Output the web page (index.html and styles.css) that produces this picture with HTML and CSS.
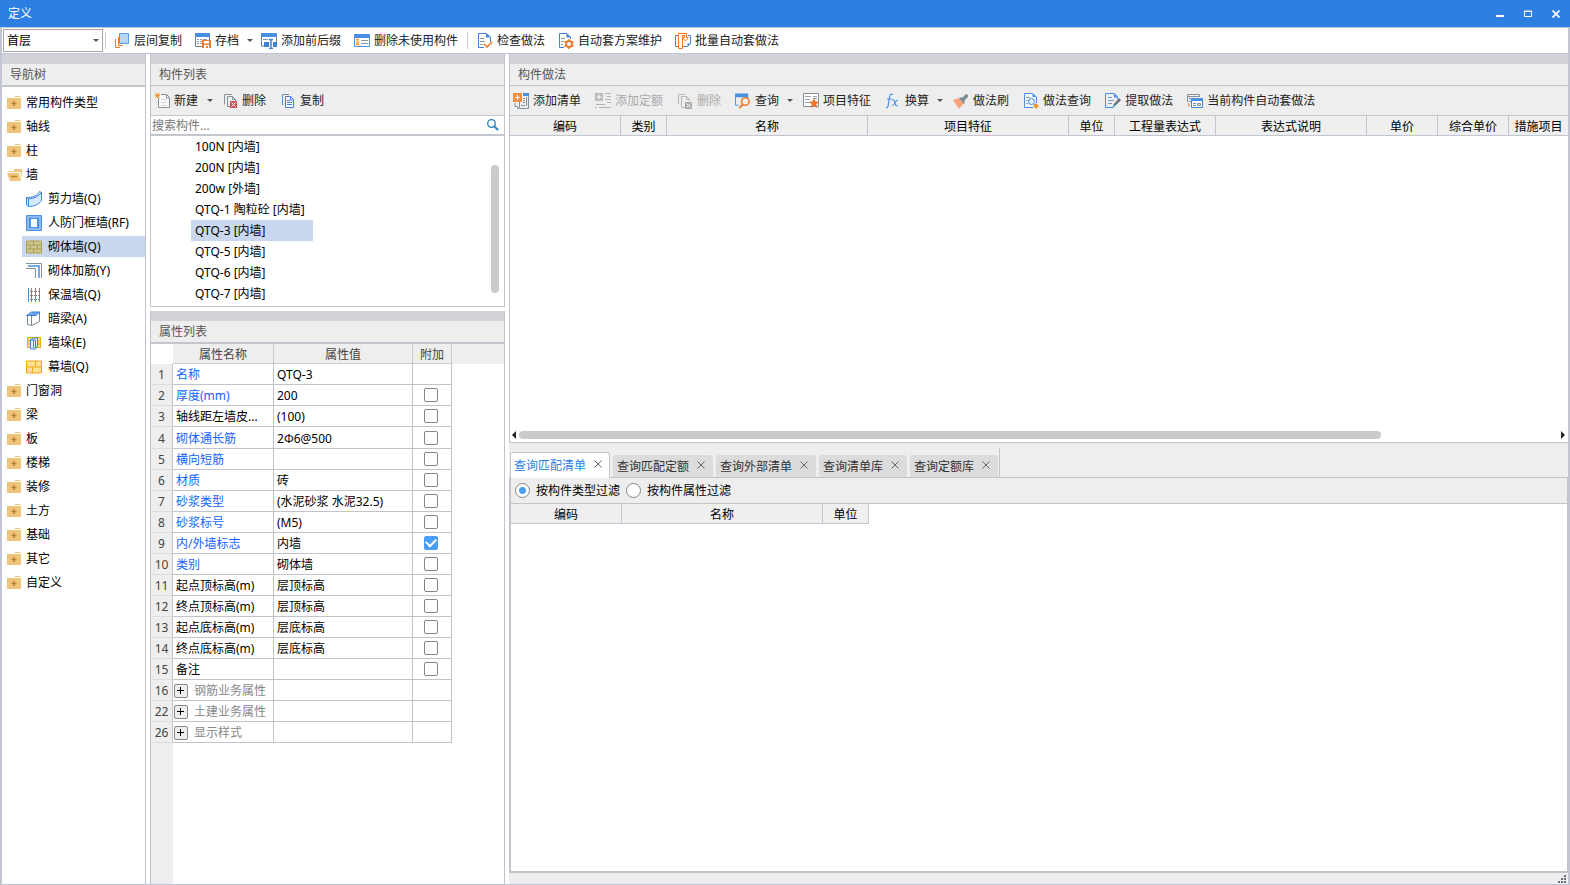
FILE: index.html
```html
<!DOCTYPE html>
<html lang="zh-CN">
<head>
<meta charset="utf-8">
<title>定义</title>
<link rel="stylesheet" href="styles.css">
</head>
<body>
<svg class="sprite" aria-hidden="true">
  <symbol id="i-layers" viewBox="0 0 16 16"><path d="M1.500 6v8.500H6M4.500 4v8.500H9" fill="none" stroke="#ee7d31"/><path d="M5.500.5h9v10h-9z" fill="#b9d7fb" stroke="#5b9be6"/></symbol>
  <symbol id="i-archive" viewBox="0 0 16 16"><path d="M0 0h15v4H0z" fill="#4a90e2"/><path d="M.5 4v9.500H7M14.500 4v3" fill="none" stroke="#6d7f8d"/><path d="M2 6.500h2M5 6.500h2M8 6.500h4M2 8.500h2M5 8.500h2M2 10.500h2M5 10.500h2" stroke="#8b98a3"/><path d="M7 7h9v8H7z" fill="#ee7d31"/><path d="M9 8h5v2.500H9zM9 12h5v3H9z" fill="#fff"/><path d="M11 13h2v2h-2z" fill="#ee7d31"/></symbol>
  <symbol id="i-affix" viewBox="0 0 16 16"><path d="M0 0h16v4H0z" fill="#4a90e2"/><path d="M.5 4v9H3M15.500 4v5" fill="none" stroke="#6d7f8d"/><path d="M2 6.500h5" stroke="#8b98a3"/><path d="M3 9h5v5H3zM12 9h4v5h-4z" fill="#3f83d8"/><path d="M8 6.500h4M10 7v8M8 15.500h4" stroke="#3f83d8" stroke-width="1.500"/></symbol>
  <symbol id="i-unused" viewBox="0 0 16 16"><path d="M.5 1.500h15v12H.5z" fill="#fff" stroke="#4a90e2"/><path d="M0 1h16v4H0z" fill="#4a90e2"/><path d="M2 6l3 2.500M5 6 2 8.500M2 9.500l3 2.500M5 9.500 2 12" stroke="#ee9a31" stroke-width="1.200"/><path d="M7 7.500h7M7 10.500h7" stroke="#8b98a3"/></symbol>
  <symbol id="i-check" viewBox="0 0 16 16"><path d="M13.500 9V4L9.500.5h-8v14H7" fill="none" stroke="#3f83d8"/><path d="M9 .5V4.500h4z" fill="#3f83d8"/><path d="M3 5.500h4M3 8.500h5M3 11.500h3" stroke="#8b98a3"/><path d="M7 11l3 3 5-5" fill="none" stroke="#ee7d31" stroke-width="1.600"/></symbol>
  <symbol id="i-scheme" viewBox="0 0 16 16"><path d="M12.500 6V4L9 .5H1.500v14H6" fill="none" stroke="#3f83d8"/><path d="M8.500 .5V4.500h4z" fill="#3f83d8"/><path d="M3 5.500h4M3 8.500h3M3 11.500h2" stroke="#8b98a3"/><circle cx="11" cy="11" r="3" fill="none" stroke="#ee7d31" stroke-width="2"/><path d="M11 6v2m0 6v2M6.500 8.500l2 1m5 3 2 1m-9 0 2-1m5-3 2-1" stroke="#ee7d31" stroke-width="1.600"/></symbol>
  <symbol id="i-batch" viewBox="0 0 16 16"><path d="M4 2.500H.5v11H4M13 2.500h2.500v8l-3 3H7" fill="none" stroke="#3f83d8"/><path d="M15.500 10.500h-3v3z" fill="#3f83d8"/><path d="M3.500 15.500V.5h8v4h2L10.500 8l-3-3.500h2v-2h-2v13z" fill="#fff" stroke="#ee7d31"/></symbol>
  <symbol id="i-new" viewBox="0 0 16 16"><path d="M3.500 5v9.500h11V4.500l-3-3H6" fill="#fafafa" stroke="#84919b"/><path d="M11.500 1.500v3.500h3" fill="none" stroke="#84919b"/><path d="M6 6.500h6M6 9.500h6M6 12.500h6" stroke="#d2d6d9"/><path d="m0 0 5 5m0-5L0 5M2.500 0v5M0 2.500h5" stroke="#ef9a2f"/></symbol>
  <symbol id="i-delete" viewBox="0 0 16 16"><path d="M1.500 11.500V1.500H9M4.500 14V3.500h5l3 3V8M8 13.500H4.500M9.500 3.500v3h3" fill="none" stroke="#84919b"/><path d="M7 8h7v7H7z" fill="#cf5353"/><path d="m8.500 9.500 4 4m0-4-4 4" stroke="#fff"/></symbol>
  <symbol id="i-delete-off" viewBox="0 0 16 16"><path d="M1.500 11.500V1.500H8M4.500 14V3.500h5l3 3V8M8 14.500H4.500M9.500 3.500v3h3" fill="none" stroke="#b5b5b5"/><path d="M8 9h7v7H8z" fill="#aaa"/><path d="m9.500 10.500 4 4m0-4-4 4" stroke="#fff"/></symbol>
  <symbol id="i-copy" viewBox="0 0 16 16"><path d="M1.500 12V1.500H8" fill="none" stroke="#6d8fb0"/><path d="M4.500 3.500h5l3 3v8h-8z" fill="#fff" stroke="#3f83d8"/><path d="M9.500 3.500V7h3" fill="none" stroke="#3f83d8"/><path d="M6 7.500h3M6 9.500h5M6 11.500h5" stroke="#3f83d8"/></symbol>
  <symbol id="i-addlist" viewBox="0 0 16 16"><path d="M10 0h6v3h-6z" fill="#4a90e2"/><path d="M15.500 3v12.500h-9V9M13.500 4v9M2 10v3.500h2.500v2H6" fill="none" stroke="#84919b"/><path d="M8 12.500h4M10 9.500h2M10 7.500h2M10 5.500h2" stroke="#84919b"/><path d="M0 0h9v9H0z" fill="#ee8f3f"/><path d="M4.500 2v5M2 4.500h5" stroke="#fff"/></symbol>
  <symbol id="i-addquota" viewBox="0 0 16 16"><path d="M0 0h8v8H0z" fill="#bbb"/><path d="M4 1.500v5M1.500 4h5" stroke="#fff"/><path d="M10 .5h6M12 3.500h4M10 6.500h6M12 9.500h4M1 11.500h9M4 14.500h12M0 14.500h2" stroke="#b3b3b3"/></symbol>
  <symbol id="i-query" viewBox="0 0 17 16"><path d="M0 0h14v4H0z" fill="#4a90e2"/><path d="M.5 3v9.500H4M13.500 3v2" fill="none" stroke="#4a90e2"/><circle cx="11" cy="8.500" r="4" fill="#fff5ec" stroke="#ee7d31" stroke-width="1.700"/><path d="m8 12-3.500 3.500" stroke="#ee7d31" stroke-width="2"/></symbol>
  <symbol id="i-feature" viewBox="0 0 16 16"><path d="M.5 .5h15v13H.5z" fill="#fff" stroke="#84919b"/><path d="M2 3.500h6M10 3.500h4M10 5.500h4M2 6.500h5M2 9.500h5" stroke="#9aa4ad"/><path d="m11 5 1.500 3.500 3.500.3-2.700 2.400.9 3.800-3.200-2-3.200 2 .9-3.800L6 8.800l3.500-.3z" fill="#f07427"/></symbol>
  <symbol id="i-fx" viewBox="0 0 16 16"><path d="M1 14.500c2 .5 2-1 2.500-4l1-6.500C5 1 6 .5 8 1.500M2 6h5M7.500 7c3-1 2 7 5 5.500M13 7c-2-.5-4 6-6 5.500" fill="none" stroke="#4a90e2" stroke-width="1.200"/></symbol>
  <symbol id="i-brush" viewBox="0 0 16 16"><path d="m0 7 6-2 5 5-5 6z" fill="#fba27a"/><path d="m6 5 2-1 1 1 4-4 2 1v2l-4 4 1 1-1 2z" fill="#7c8b95"/></symbol>
  <symbol id="i-methodq" viewBox="0 0 16 16"><path d="M13.500 10V4L9.500.5h-8v14H10" fill="#f7fbff" stroke="#4a90e2"/><path d="M9.500 .5V4h4z" fill="#4a90e2"/><path d="M3 4.500h4M3 7.500h2M3 10.500h2" stroke="#8b98a3"/><circle cx="8.500" cy="8.500" r="3" fill="#e9f3ff" stroke="#3f83d8"/><path d="m11 11 3 3" stroke="#3f83d8"/><path d="m13 10 3 3-3 3-3-3z" fill="#ef9a2f"/></symbol>
  <symbol id="i-extract" viewBox="0 0 16 16"><path d="M12.500 6V4L9.500.5h-9v14h8" fill="none" stroke="#4a90e2"/><path d="M9 .5V4.500h4z" fill="#4a90e2"/><path d="M3 4.500h4M3 7.500h6M3 10.500h4" stroke="#8b98a3"/><path d="m14 5 2 2-6 6-2 1 1-3z" fill="#65717b"/><path d="m9 11 1.500 1.500L7 15z" fill="#31b4c8"/></symbol>
  <symbol id="i-current" viewBox="0 0 16 16"><path d="M.5 9V1.500h12V4M1 3.500h12M2 5.500h2M2 8.500h2" fill="none" stroke="#84919b"/><path d="M1.500 10v2.500H3" fill="none" stroke="#ee7d31"/><path d="M4.500 5.500h11v9h-11z" fill="#fff" stroke="#3f83d8"/><path d="M4 5h12v3H4z" fill="#4a90e2"/><path d="M6 10.500h3M6 12.500h3M10.500 10.500h3v2h-3z" stroke="#84919b" fill="#cfd5da"/></symbol>
  <symbol id="i-search" viewBox="0 0 12 12"><circle cx="4.500" cy="4.500" r="3.800" fill="none" stroke="#2583bd" stroke-width="1.300"/><path d="m7 7 4 4" stroke="#2583bd" stroke-width="2"/></symbol>
  <symbol id="i-folder" viewBox="0 0 16 14"><path d="M8 0h5l1 1H7zM0 2h14v11H0z" fill="#eec57b"/><path d="M7 5v5M4.500 7.500h5" stroke="#b98534" stroke-width="1.600"/></symbol>
  <symbol id="i-folder-open" viewBox="0 0 16 14"><path d="M7 1h8v11l-1.500-8H1.500V3H7z" fill="#eec57b"/><path d="M0 5h12l2 8H3z" fill="#eec57b"/><path d="M4 8.500h6" stroke="#b98534" stroke-width="1.600"/></symbol>
  <symbol id="i-shear" viewBox="0 0 16 16"><path d="M.5 6.500C7 6.500 11 5 13.500.5l2 1v8C12 14 8 15.500 2.500 15.500l-2-1.500z" fill="#d8e9fc" stroke="#3f83d8"/><path d="M.5 6.500l2 1.500c6-.5 10-2.500 13-6.500M2.500 8v7" fill="none" stroke="#3f83d8"/></symbol>
  <symbol id="i-frame" viewBox="0 0 16 16"><path d="M.5.5h15v15H.5z" fill="#8dbaf2" stroke="#4a90e2"/><path d="M3 3h10v10H3z" fill="#4a90e2"/><path d="M5 4h6v8H5z" fill="#fff"/></symbol>
  <symbol id="i-brick" viewBox="0 0 16 13"><path d="M.5.500h15v12H.5zM0 4.500h16M0 8.500h16M7.500 0v4.500M4.500 4.500v4M11.500 4.500v4M7.500 8.500v4" fill="#c9c691" stroke="#ae9f4e"/></symbol>
  <symbol id="i-rebar" viewBox="0 0 16 16"><path d="M0 .5h15.500V15M0 5.500h9.500V15" fill="none" stroke="#84919b"/><path d="M2 3h11v12" fill="none" stroke="#4a90e2" stroke-width="1.500"/></symbol>
  <symbol id="i-insul" viewBox="0 0 16 16"><path d="M2.500 1v14M5.500 1v14M9.500 1v14M13.500 1v14" stroke="#4a90e2"/><path d="M2 4.500h11M2 8.500h11M2 12.500h11" stroke="#6d7f8d" stroke-dasharray="1 1"/></symbol>
  <symbol id="i-beam" viewBox="0 0 16 16"><path d="M1.500 4.500h4v10l-4-1zM5.500 14.500l8-4v-9" fill="#fff" stroke="#7a8894"/><path d="m.5 4.500 5-3.500h8.500l-4 3.500z" fill="#8fbdf3" stroke="#3f83d8"/><path d="M4.500 4 9 1M8 4l4-3" stroke="#3f83d8"/></symbol>
  <symbol id="i-pier" viewBox="0 0 16 16"><path d="M1.500 2.500h13v10h-13zM1 6h14M1 9h14" fill="#fddc86" stroke="#f2a900"/><path d="m4.500 5 3-2h4v8l-2 3h-5z" fill="#e2effd" stroke="#3f83d8"/><path d="M7.500 5v8M4.500 5h5v8" fill="none" stroke="#3f83d8"/></symbol>
  <symbol id="i-curtain" viewBox="0 0 16 13"><path d="M.5.500h15v12H.5zM0 6.500h16M9.500 0v6.500M6.500 6.500v6" fill="#fde08f" stroke="#f2a81d"/></symbol>
</svg>

<div class="app">
  <header class="titlebar">
    <span class="title">定义</span>
    <button class="win" aria-label="最小化"><svg viewBox="0 0 8 8"><path d="M0 5h8v2H0z" fill="#fff"/></svg></button>
    <button class="win" aria-label="最大化"><svg viewBox="0 0 8 8"><path d="M.5 1.500h7v5h-7zM0 1h8" fill="none" stroke="#fff"/></svg></button>
    <button class="win" aria-label="关闭"><svg viewBox="0 0 8 8"><path d="m.5.500 7 7m0-7-7 7" stroke="#fff" stroke-width="1.700"/></svg></button>
  </header>

  <div class="mainbar">
    <div class="floor">
      <select aria-label="楼层"><option>首层</option></select>
      <span class="caret"></span>
    </div>
    <span class="sep"></span>
    <button class="tool"><svg class="ic"><use href="#i-layers"/></svg>层间复制</button>
    <button class="tool drop"><svg class="ic"><use href="#i-archive"/></svg>存档<span class="caret"></span></button>
    <button class="tool"><svg class="ic"><use href="#i-affix"/></svg>添加前后缀</button>
    <button class="tool"><svg class="ic"><use href="#i-unused"/></svg>删除未使用构件</button>
    <span class="sep"></span>
    <button class="tool"><svg class="ic"><use href="#i-check"/></svg>检查做法</button>
    <button class="tool"><svg class="ic"><use href="#i-scheme"/></svg>自动套方案维护</button>
    <button class="tool"><svg class="ic"><use href="#i-batch"/></svg>批量自动套做法</button>
  </div>

  <div class="work">
    <nav class="panel nav">
      <h2 class="head thick">导航树</h2>
      <ul class="tree">
        <li><svg class="fi"><use href="#i-folder"/></svg>常用构件类型</li>
        <li><svg class="fi"><use href="#i-folder"/></svg>轴线</li>
        <li><svg class="fi"><use href="#i-folder"/></svg>柱</li>
        <li><svg class="fi"><use href="#i-folder-open"/></svg>墙</li>
        <li class="sub"><svg class="ic"><use href="#i-shear"/></svg>剪力墙(Q)</li>
        <li class="sub"><svg class="ic"><use href="#i-frame"/></svg>人防门框墙(RF)</li>
        <li class="sub on"><svg class="ic"><use href="#i-brick"/></svg>砌体墙(Q)</li>
        <li class="sub"><svg class="ic"><use href="#i-rebar"/></svg>砌体加筋(Y)</li>
        <li class="sub"><svg class="ic"><use href="#i-insul"/></svg>保温墙(Q)</li>
        <li class="sub"><svg class="ic"><use href="#i-beam"/></svg>暗梁(A)</li>
        <li class="sub"><svg class="ic"><use href="#i-pier"/></svg>墙垛(E)</li>
        <li class="sub"><svg class="ic"><use href="#i-curtain"/></svg>幕墙(Q)</li>
        <li><svg class="fi"><use href="#i-folder"/></svg>门窗洞</li>
        <li><svg class="fi"><use href="#i-folder"/></svg>梁</li>
        <li><svg class="fi"><use href="#i-folder"/></svg>板</li>
        <li><svg class="fi"><use href="#i-folder"/></svg>楼梯</li>
        <li><svg class="fi"><use href="#i-folder"/></svg>装修</li>
        <li><svg class="fi"><use href="#i-folder"/></svg>土方</li>
        <li><svg class="fi"><use href="#i-folder"/></svg>基础</li>
        <li><svg class="fi"><use href="#i-folder"/></svg>其它</li>
        <li><svg class="fi"><use href="#i-folder"/></svg>自定义</li>
      </ul>
    </nav>

    <div class="middle">
      <section class="panel components">
        <h2 class="head">构件列表</h2>
        <div class="bar">
          <button class="tool drop"><svg class="ic"><use href="#i-new"/></svg>新建<span class="caret"></span></button>
          <button class="tool"><svg class="ic"><use href="#i-delete"/></svg>删除</button>
          <button class="tool"><svg class="ic"><use href="#i-copy"/></svg>复制</button>
        </div>
        <div class="search">
          <input type="text" placeholder="搜索构件..." aria-label="搜索构件">
          <button aria-label="搜索"><svg><use href="#i-search"/></svg></button>
        </div>
        <div class="listbox">
          <ul class="list">
            <li>100N [内墙]</li>
            <li>200N [内墙]</li>
            <li>200w [外墙]</li>
            <li>QTQ-1 陶粒砼 [内墙]</li>
            <li class="on">QTQ-3 [内墙]</li>
            <li>QTQ-5 [内墙]</li>
            <li>QTQ-6 [内墙]</li>
            <li>QTQ-7 [内墙]</li>
          </ul>
          <div class="vscroll"></div>
        </div>
      </section>

      <section class="panel props">
        <h2 class="head thick">属性列表</h2>
        <div class="sheet">
          <table class="ptable">
            <colgroup><col class="c-no"><col class="c-name"><col class="c-val"><col class="c-add"></colgroup>
            <thead><tr><td></td><th>属性名称</th><th>属性值</th><th>附加</th></tr></thead>
            <tbody>
              <tr><th>1</th><td class="key">名称</td><td>QTQ-3</td><td></td></tr>
              <tr><th>2</th><td class="key">厚度(mm)</td><td>200</td><td><input type="checkbox" aria-label="附加 厚度"></td></tr>
              <tr><th>3</th><td>轴线距左墙皮...</td><td>(100)</td><td><input type="checkbox" aria-label="附加 轴线距左墙皮"></td></tr>
              <tr><th>4</th><td class="key">砌体通长筋</td><td>2<span class="bar-mark">Ф</span>6@500</td><td><input type="checkbox" aria-label="附加 砌体通长筋"></td></tr>
              <tr><th>5</th><td class="key">横向短筋</td><td></td><td><input type="checkbox" aria-label="附加 横向短筋"></td></tr>
              <tr><th>6</th><td class="key">材质</td><td>砖</td><td><input type="checkbox" aria-label="附加 材质"></td></tr>
              <tr><th>7</th><td class="key">砂浆类型</td><td>(水泥砂浆 水泥32.5)</td><td><input type="checkbox" aria-label="附加 砂浆类型"></td></tr>
              <tr><th>8</th><td class="key">砂浆标号</td><td>(M5)</td><td><input type="checkbox" aria-label="附加 砂浆标号"></td></tr>
              <tr><th>9</th><td class="key">内/外墙标志</td><td>内墙</td><td><input type="checkbox" checked aria-label="附加 内/外墙标志"></td></tr>
              <tr><th>10</th><td class="key">类别</td><td>砌体墙</td><td><input type="checkbox" aria-label="附加 类别"></td></tr>
              <tr><th>11</th><td>起点顶标高(m)</td><td>层顶标高</td><td><input type="checkbox" aria-label="附加 起点顶标高"></td></tr>
              <tr><th>12</th><td>终点顶标高(m)</td><td>层顶标高</td><td><input type="checkbox" aria-label="附加 终点顶标高"></td></tr>
              <tr><th>13</th><td>起点底标高(m)</td><td>层底标高</td><td><input type="checkbox" aria-label="附加 起点底标高"></td></tr>
              <tr><th>14</th><td>终点底标高(m)</td><td>层底标高</td><td><input type="checkbox" aria-label="附加 终点底标高"></td></tr>
              <tr><th>15</th><td>备注</td><td></td><td><input type="checkbox" aria-label="附加 备注"></td></tr>
              <tr><th>16</th><td class="group"><button class="plus" aria-label="展开"></button>钢筋业务属性</td><td></td><td></td></tr>
              <tr><th>22</th><td class="group"><button class="plus" aria-label="展开"></button>土建业务属性</td><td></td><td></td></tr>
              <tr><th>26</th><td class="group"><button class="plus" aria-label="展开"></button>显示样式</td><td></td><td></td></tr>
            </tbody>
          </table>
          <div class="gutter"></div>
        </div>
      </section>
    </div>

    <main class="right">
      <section class="panel methods">
        <h2 class="head">构件做法</h2>
        <div class="bar">
          <button class="tool"><svg class="ic"><use href="#i-addlist"/></svg>添加清单</button>
          <button class="tool" disabled><svg class="ic"><use href="#i-addquota"/></svg>添加定额</button>
          <button class="tool" disabled><svg class="ic"><use href="#i-delete-off"/></svg>删除</button>
          <button class="tool drop"><svg class="ic"><use href="#i-query"/></svg>查询<span class="caret"></span></button>
          <button class="tool"><svg class="ic"><use href="#i-feature"/></svg>项目特征</button>
          <button class="tool drop"><svg class="ic"><use href="#i-fx"/></svg>换算<span class="caret"></span></button>
          <button class="tool"><svg class="ic"><use href="#i-brush"/></svg>做法刷</button>
          <button class="tool"><svg class="ic"><use href="#i-methodq"/></svg>做法查询</button>
          <button class="tool"><svg class="ic"><use href="#i-extract"/></svg>提取做法</button>
          <button class="tool"><svg class="ic"><use href="#i-current"/></svg>当前构件自动套做法</button>
        </div>
        <table class="grid wide">
          <colgroup><col class="w111"><col class="w46"><col class="w201"><col class="w201"><col class="w46"><col class="w101"><col class="w151"><col class="w71"><col class="w71"><col></colgroup>
          <thead><tr><th>编码</th><th>类别</th><th>名称</th><th>项目特征</th><th>单位</th><th>工程量表达式</th><th>表达式说明</th><th>单价</th><th>综合单价</th><th>措施项目</th></tr></thead>
        </table>
        <div class="hscroll"><span class="arrow left"></span><div class="track"><div class="thumb"></div></div><span class="arrow"></span></div>
      </section>

      <section class="queries">
        <div class="tabs" role="tablist">
          <button class="tab on" role="tab" aria-selected="true">查询匹配清单<svg viewBox="0 0 8 8"><path d="m.5.500 7 7m0-7-7 7"/></svg></button>
          <button class="tab" role="tab">查询匹配定额<svg viewBox="0 0 8 8"><path d="m.5.500 7 7m0-7-7 7"/></svg></button>
          <button class="tab" role="tab">查询外部清单<svg viewBox="0 0 8 8"><path d="m.5.500 7 7m0-7-7 7"/></svg></button>
          <button class="tab" role="tab">查询清单库<svg viewBox="0 0 8 8"><path d="m.5.500 7 7m0-7-7 7"/></svg></button>
          <button class="tab" role="tab">查询定额库<svg viewBox="0 0 8 8"><path d="m.5.500 7 7m0-7-7 7"/></svg></button>
          <span class="tabend"></span>
        </div>
        <div class="result">
          <div class="filters">
            <label><input type="radio" name="filter" checked>按构件类型过滤</label>
            <label><input type="radio" name="filter">按构件属性过滤</label>
          </div>
          <table class="grid">
            <colgroup><col class="w111"><col class="w201"><col class="w46"></colgroup>
            <thead><tr><th>编码</th><th>名称</th><th>单位</th></tr></thead>
          </table>
        </div>
        <footer class="status"><svg viewBox="0 0 8 8"><path d="M6 0h2v2H6zM3 3h2v2H3zM6 3h2v2H6zM0 6h2v2H0zM3 6h2v2H3zM6 6h2v2H6z" fill="#6c6f7a"/></svg></footer>
      </section>
    </main>
  </div>
</div>
</body>
</html>
```
FILE: styles.css
```css
* { box-sizing: border-box; }

body {
  margin: 0;
  color: #000;
  background: #fff;
  font: 12px/20px "Noto Sans", "Noto Sans CJK SC", sans-serif;
}

button, input, select {
  margin: 0;
  padding: 0;
  border: 0;
  background: none;
  color: inherit;
  font: inherit;
}

h2, ul { margin: 0; padding: 0; list-style: none; font-size: 12px; font-weight: 400; }
li, button, th, td, label { white-space: nowrap; }
table { border-collapse: separate; border-spacing: 0; table-layout: fixed; }
th { font-weight: 400; }
svg { display: block; flex: none; }

.sprite { position: absolute; width: 0; height: 0; }
.ic { width: 16px; height: 16px; }

.app { display: flex; flex-direction: column; height: 100vh; min-height: 780px; }

.titlebar {
  display: flex;
  align-items: center;
  height: 27px;
  padding-left: 8px;
  color: #fff;
  background: #2d7fe2;
}
.title { flex: 1; }
.win { display: grid; place-items: center; width: 28px; height: 27px; }
.win svg { width: 8px; height: 8px; }

.mainbar {
  display: flex;
  align-items: center;
  gap: 1px;
  height: 27px;
  padding-left: 1px;
  border: solid #c2c6d2;
  border-width: 1px 2px;
}
.floor { position: relative; width: 100px; height: 23px; }
.floor select {
  width: 100%;
  height: 100%;
  padding-left: 3px;
  border: 1px solid #a6a6a6;
  background: #fff;
  appearance: none;
}
.floor .caret { position: absolute; right: 4px; top: 10px; margin: 0; }
.sep { width: 1px; height: 17px; margin: 0 2px; background: #ccc; }
.floor + .sep { margin: 0 1px; }
.caret { border: 3px solid transparent; border-top-color: #555; border-bottom: 0; margin-left: 4px; }

.tool {
  display: flex;
  align-items: center;
  gap: 4px;
  height: 22px;
  padding: 0 6px;
  border-radius: 3px;
  color: #222;
}
.tool.drop { padding-right: 1px; }
.tool:disabled { color: #aaa; }

.work {
  flex: 1;
  display: flex;
  min-height: 0;
  border: solid #c2c6d2;
  border-width: 0 2px 1px;
}
.nav { flex: none; width: 144px; border-right: 1px solid #c2c4cb; }
.middle { flex: none; display: flex; flex-direction: column; gap: 4px; width: 355px; margin: 0 4px; }
.right { flex: 1; display: flex; flex-direction: column; min-width: 0; }

.head {
  height: 32px;
  padding: 0 8px;
  border-top: 10px solid #d2d3d9;
  border-bottom: 1px solid #c3c6cd;
  line-height: 21px;
  color: #555;
  background: #eee;
}
.head.thick { height: 33px; border-bottom-width: 2px; }

.tree { padding-top: 5px; }
.tree li {
  display: flex;
  align-items: center;
  gap: 3px;
  height: 21px;
  margin-bottom: 3px;
  padding-left: 5px;
}
.fi { width: 16px; height: 14px; }
.tree .sub { gap: 6px; margin-left: 20px; padding-left: 4px; }
.on { background: #c9d8ef; }

.components, .props { border: solid #c2c4cb; border-width: 0 1px 1px; }
.props { flex: 1; display: flex; flex-direction: column; border-bottom: 0; }

.bar {
  display: flex;
  align-items: center;
  height: 30px;
  border-bottom: 1px solid #c3c6cd;
  background: #eee;
}
.components .bar .tool { padding-left: 5px; padding-right: 10px; gap: 3px; }
.components .bar .caret { margin-left: 6px; }
.components .bar .drop { padding-left: 4px; padding-right: 5px; }
.methods .bar .tool { padding: 0 7px; }
.methods .bar .tool:first-child { padding-left: 3px; }
.methods .bar .drop { padding-right: 3px; }

.search { display: flex; align-items: center; height: 20px; border-bottom: 2px solid #c3c6cd; }
.search input { flex: 1; min-width: 0; height: 18px; padding: 2px 0 0 1px; outline: 0; }
.search input::placeholder { color: #777; opacity: 1; }
.search button { width: 17px; }
.search svg { width: 12px; height: 12px; }

.listbox { display: flex; height: 170px; overflow: hidden; }
.list { flex: 1; padding-left: 40px; }
.list li { width: 122px; padding-left: 4px; height: 21px; line-height: 21px; }
.vscroll { width: 8px; height: 128px; margin: 29px 5px 0; border-radius: 4px; background: #cbcbcb; }

.sheet { flex: 1; display: flex; flex-direction: column; background: linear-gradient(#eee, #eee) 22px 0 / 100% 20px no-repeat; }
.ptable { width: 301px; }
.ptable td, .ptable th {
  height: 21px;
  padding: 2px 3px 0;
  border: solid #c2c4cb;
  border-width: 0 1px 1px 0;
  line-height: 18px;
}
.ptable thead td { height: 20px; border: 0; background: #fff; }
.ptable thead th { height: 20px; line-height: 17px; color: #444; background: #eee; border-color: #ccc; }
.ptable tbody th { padding: 2px 0 0; border-bottom-color: #ddd; color: #444; background: #eee; }
.ptable tbody td:last-child { padding: 0 2px 0 0; }
.c-no { width: 22px; }
.c-name { width: 101px; }
.c-val { width: 139px; }
.c-add { width: 39px; }
.ptable .key { color: #1463ff; }
.ptable .group { padding-left: 1px; color: #888; }
.bar-mark { font-family: "Noto Sans CJK SC", sans-serif; }
.plus {
  display: inline-block;
  width: 14px;
  height: 14px;
  margin-right: 6px;
  border: 1px solid #888;
  border-radius: 2px;
  vertical-align: -2px;
  background:
    linear-gradient(#000, #000) 2px 5px / 7px 1px no-repeat,
    linear-gradient(#000, #000) 5px 2px / 1px 7px no-repeat,
    #eee;
}
.gutter { flex: 1; width: 22px; background: #eee; }

input[type="checkbox"] {
  display: grid;
  place-items: center;
  width: 14px;
  height: 14px;
  margin: 0 auto;
  border: 1px solid #858585;
  border-radius: 2px;
  background: #fff;
  appearance: none;
}
input[type="checkbox"]:checked { border-color: #4c9df5; background: #4c9df5; }
input[type="checkbox"]:checked::after {
  content: "";
  width: 8px;
  height: 5px;
  margin-bottom: 3px;
  border: solid #fff;
  border-width: 0 0 2px 2px;
  transform: rotate(-45deg);
}

.methods { display: flex; flex-direction: column; height: 389px; border: solid #c2c4cb; border-width: 0 0 1px 1px; }
.grid th {
  height: 20px;
  padding: 2px 0 0;
  border: solid #c0c6d2;
  border-width: 0 1px 1px 0;
  line-height: 17px;
  background: #efefef;
}
.grid.wide { width: 100%; }
.wide th:last-child { border-right: 0; }
.w46 { width: 46px; }
.w71 { width: 71px; }
.w101 { width: 101px; }
.w111 { width: 111px; }
.w151 { width: 151px; }
.w201 { width: 201px; }

.hscroll { display: flex; align-items: center; gap: 3px; height: 14px; margin-top: auto; padding: 0 3px 0 2px; }
.track { flex: 1; }
.thumb { width: 83%; height: 8px; border-radius: 4px; background: #cbcbcb; }
.arrow { border: 4px solid transparent; border-left-color: #222; border-right: 0; }
.arrow.left { border-right: 4px solid #222; border-left: 0; }

.queries { flex: 1; display: flex; flex-direction: column; background: #eee; }
.tabs { display: flex; align-items: flex-end; gap: 3px; height: 35px; padding-left: 1px; border-bottom: 1px solid #c3c3c8; }
.tab {
  display: flex;
  align-items: center;
  gap: 8px;
  height: 22px;
  padding: 1px 8px 0 4px;
  border-radius: 3px 3px 0 0;
  color: #333;
  background: #dcdcdc;
}
.tab.on {
  height: 26px;
  margin-bottom: -1px;
  border: 1px solid #c3c6cd;
  border-bottom: 0;
  padding: 0 7px 0 3px;
  color: #2d7fe2;
  background: #fff;
}
.tab svg { width: 8px; height: 8px; margin-bottom: 4px; fill: none; stroke: #666; stroke-width: 1; }
.tabend { width: 1px; height: 29px; margin-left: -2px; background: #c3c6cd; }

.result { flex: 1; border: solid #c2c4cb; border-width: 0 1px 2px 2px; background: #fff; }
.filters {
  display: flex;
  align-items: center;
  gap: 6px;
  height: 26px;
  padding-left: 4px;
  border-bottom: 1px solid #c3c3c8;
  background: #eee;
}
.filters label { display: flex; align-items: center; gap: 6px; }
.filters input {
  width: 15px;
  height: 15px;
  border: 1px solid #858585;
  border-radius: 50%;
  background: #fff;
  appearance: none;
}
.filters input:checked { background: radial-gradient(circle, #4c9df5 3px, #fff 4px); }

.status { display: flex; justify-content: flex-end; align-items: center; height: 11px; padding-right: 2px; }
.status svg { width: 8px; height: 8px; }
```
